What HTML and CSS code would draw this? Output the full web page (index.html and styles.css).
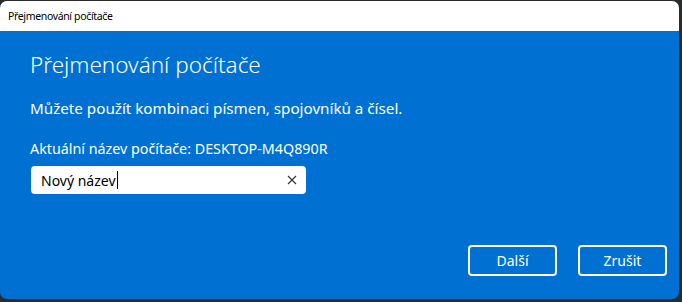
FILE: index.html
```html
<!DOCTYPE html>
<html lang="cs">
<head>
<meta charset="utf-8">
<title>Přejmenování počítače</title>
<link rel="stylesheet" href="styles.css">
</head>
<body>
<div class="window">
  <div class="titlebar">Přejmenování počítače</div>
  <div class="content">
    <h1 class="heading">Přejmenování počítače</h1>
    <p class="hint">Můžete použít kombinaci písmen, spojovníků a čísel.</p>
    <p class="current">Aktuální název počítače: DESKTOP-M4Q890R</p>
    <div class="input">
      <span class="value">Nový název</span><span class="caret"></span>
      <svg class="clear" width="10" height="10" viewBox="0 0 10 10"><path d="M1 1L9 9M9 1L1 9" stroke="#333" stroke-width="1.1" fill="none"/></svg>
    </div>
    <div class="spacer"></div>
    <div class="buttons">
      <button class="btn">Další</button>
      <button class="btn">Zrušit</button>
    </div>
  </div>
</div>
</body>
</html>
```
FILE: styles.css
```css
html, body {
  margin: 0;
  padding: 0;
  background: #2b2b2b;
  width: 682px;
  height: 302px;
  overflow: hidden;
}
body {
  padding: 1px 3px 3px 0;
  box-sizing: border-box;
  font-family: "Noto Sans", "Open Sans", sans-serif;
}
.window {
  width: 679px;
  height: 298px;
  border-radius: 7px;
  overflow: hidden;
  display: flex;
  flex-direction: column;
  background: #0071d3;
}
.titlebar {
  height: 30px;
  background: #ffffff;
  color: #000;
  font-size: 10.5px;
  letter-spacing: -0.35px;
  line-height: 30px;
  padding-left: 8px;
  flex: none;
}
.content {
  flex: 1;
  display: flex;
  flex-direction: column;
  padding: 20px 12px 23px 30px;
  color: #fff;
}
.heading {
  margin: 0;
  font-weight: 300;
  font-size: 22.5px;
  line-height: 28px;
  letter-spacing: 0;
}
.hint {
  margin: 19px 0 0 0;
  font-size: 15.2px;
  line-height: 20px;
}
.current {
  margin: 21px 0 0 0;
  font-size: 14.3px;
  line-height: 20px;
}
.input {
  margin: 7px 0 0 1px;
  width: 275px;
  height: 28px;
  background: #fff;
  border-radius: 4px;
  display: flex;
  align-items: center;
  padding-left: 10px;
  box-sizing: border-box;
  color: #000;
  font-size: 14px;
}
.caret {
  display: inline-block;
  width: 1px;
  height: 18px;
  background: #000;
  margin-left: 1px;
}
.clear {
  margin-left: auto;
  margin-right: 9px;
}
.spacer {
  flex: 1;
}
.buttons {
  display: flex;
  justify-content: flex-end;
  gap: 21px;
}
.btn {
  width: 89px;
  height: 31px;
  border: 2px solid #fff;
  border-radius: 4px;
  background: transparent;
  color: #fff;
  font-family: "Noto Sans", "Open Sans", sans-serif;
  font-size: 14px;
  padding: 0;
}
```
